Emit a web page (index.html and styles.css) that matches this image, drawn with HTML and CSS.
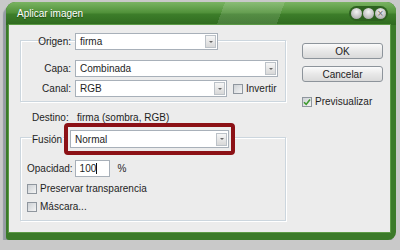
FILE: index.html
```html
<!DOCTYPE html>
<html lang="es">
    <head>
        <meta charset="utf-8">
        <title>Aplicar imagen</title>
        <link rel="stylesheet" href="styles.css">
    </head>
    <body>
        <div class="window">
            <div class="titlebar">
                <span class="title">Aplicar imagen</span>
                <div class="winbtns">
                    <span class="winbtn"></span>
                    <span class="winbtn"></span>
                    <span class="winbtn close">&times;</span>
                </div>
            </div>

            <div class="content">
                <div class="left">
                    <div class="group source">
                        <div class="row">
                            <span class="lbl">Origen:</span>
                            <div class="field select w-origen"><span>firma</span><span class="drop"></span></div>
                        </div>
                        <div class="row capa">
                            <span class="lbl">Capa:</span>
                            <div class="field select w-capa"><span>Combinada</span><span class="drop"></span></div>
                        </div>
                        <div class="row canal">
                            <span class="lbl">Canal:</span>
                            <div class="field select w-canal"><span>RGB</span><span class="drop"></span></div>
                            <span class="check invert"></span>
                            <span class="cblabel">Invertir</span>
                        </div>
                    </div>

                    <div class="dest">
                        <span class="dest-lbl">Destino:</span>
                        <span>firma (sombra, RGB)</span>
                    </div>

                    <div class="group blend">
                        <div class="row blend-row">
                            <span class="legend">Fusión</span>
                            <div class="frame">
                                <div class="field select w-blend"><span>Normal</span><span class="drop"></span></div>
                            </div>
                        </div>
                        <div class="row opacity">
                            <span class="op-lbl">Opacidad:</span>
                            <div class="field w-op"><span>100</span><span class="caret"></span></div>
                            <span class="pct">%</span>
                        </div>
                        <div class="row cbrow first-cb">
                            <span class="check"></span>
                            <span class="cblabel">Preservar transparencia</span>
                        </div>
                        <div class="row cbrow second-cb">
                            <span class="check"></span>
                            <span class="cblabel">Máscara...</span>
                        </div>
                    </div>
                </div>

                <div class="right">
                    <div class="btn">OK</div>
                    <div class="btn cancel">Cancelar</div>
                    <div class="row cbrow preview">
                        <span class="check">
                            <svg width="8" height="8" viewBox="0 0 8 8"><path d="M1 4.2 L3.2 6.4 L7 1.4" fill="none" stroke="#3e9a2e" stroke-width="1.6"/></svg>
                        </span>
                        <span class="cblabel">Previsualizar</span>
                    </div>
                </div>
            </div>
        </div>
    </body>
</html>
```

FILE: styles.css
```css
html {
    background-color: #c9c9c9;
}

body {
    margin: 0px;
    font-family: "Liberation Sans", Arial, sans-serif;
    font-size: 10px;
    color: #1e1e1e;
}

.window {
    width: 390px;
    margin: 2px 0px 0px 6px;
    padding: 0px 6px 8px 3px;
    box-sizing: border-box;
    background-color: #3b7a29;
    border-radius: 9px 9px 8px 3px;
    box-shadow: -3px 4px 1px #959ca3;
}

.titlebar {
    height: 23px;
    margin: 0px -6px 0px -3px;
    padding: 0px 8px 0px 11px;
    display: flex;
    align-items: center;
    justify-content: space-between;
    border-radius: 9px 9px 0px 0px;
    background:
        linear-gradient(110deg, transparent 55%, rgba(255, 255, 255, 0.12) 55%, rgba(255, 255, 255, 0.12) 70%, transparent 70%),
        linear-gradient(#7ab462, #4f9038 48%, #3d7e2a 52%, #2f6a1f);
    color: white;
    text-shadow: 0px 1px 1px #1f4a14;
}

.winbtns {
    display: flex;
    gap: 1px;
    padding: 2px;
    background-color: #2d611f;
    border-radius: 8px;
}

.winbtn {
    width: 11px;
    height: 11px;
    border-radius: 50%;
    background: radial-gradient(circle at 50% 35%, #f4f4f4, #bcbcbc 65%, #8e8e8e);
    display: flex;
    align-items: center;
    justify-content: center;
    font-size: 10px;
    line-height: 10px;
    color: #6a6a6a;
    text-shadow: none;
}

.content {
    height: 207px;
    box-sizing: border-box;
    padding: 8px 0px 0px 11px;
    display: flex;
    background-color: #ececec;
    box-shadow: 0px 0px 0px 1px #5c9a46;
}

.left {
    width: 266px;
}

.right {
    width: 81px;
    margin-left: 16px;
    padding-top: 10px;
}

.row {
    display: flex;
    align-items: center;
}

.group {
    border: 1px solid #ccd6de;
    box-shadow: inset 1px 1px 0px white, 1px 1px 0px white;
}

.source {
    margin-top: 7px;
    padding-bottom: 4px;
}

.source .row:first-child {
    margin-top: -8px;
}

.capa {
    margin-top: 10px;
}

.canal {
    margin-top: 3px;
}

.lbl {
    width: 50px;
    margin-right: 4px;
    text-align: right;
}

.field {
    height: 17px;
    box-sizing: border-box;
    padding-left: 4px;
    display: flex;
    align-items: center;
    border: 1px solid #a8b0b9;
    background-color: white;
}

.drop {
    width: 11px;
    height: 13px;
    margin-left: auto;
    margin-right: 1px;
    box-sizing: border-box;
    display: flex;
    align-items: center;
    justify-content: center;
    border: 1px solid #bcc2c8;
    background: linear-gradient(#f6f6f6, #d8d8d8);
}

.drop::after {
    content: "";
    border-left: 2px solid transparent;
    border-right: 2px solid transparent;
    border-top: 2px solid #666;
}

.w-origen {
    width: 143px;
}

.w-capa {
    width: 203px;
}

.w-canal {
    width: 152px;
}

.check {
    width: 10px;
    height: 10px;
    box-sizing: border-box;
    display: flex;
    align-items: center;
    justify-content: center;
    border: 1px solid #8f969e;
    background: linear-gradient(135deg, #cdd1d5, #f4f4f4);
}

.invert {
    margin-left: 6px;
}

.cblabel {
    margin-left: 3px;
}

.dest {
    height: 12px;
    margin-top: 9px;
    padding-left: 12px;
    display: flex;
    align-items: center;
}

.dest-lbl {
    width: 45px;
}

.blend {
    margin-top: 14px;
    padding: 0px 0px 8px 6px;
}

.blend-row {
    margin-top: -15px;
    padding-left: 5px;
}

.legend {
    padding-right: 1px;
    background-color: #ececec;
}

.frame {
    margin-left: 1px;
    padding: 3px 2px;
    border: 4px solid #8c1116;
    border-radius: 4px;
    background-color: #ececec;
}

.w-blend {
    width: 159px;
    height: 18px;
}

.opacity {
    margin-top: 5px;
}

.op-lbl {
    margin-right: 2px;
}

.w-op {
    width: 35px;
}

.caret {
    width: 1px;
    height: 11px;
    background-color: #111;
}

.pct {
    margin-left: 8px;
}

.cbrow {
    height: 11px;
}

.first-cb {
    margin-top: 6px;
}

.second-cb {
    margin-top: 7px;
}

.btn {
    height: 16px;
    box-sizing: border-box;
    display: flex;
    align-items: center;
    justify-content: center;
    border: 1px solid #8d949b;
    border-radius: 3px;
    background: linear-gradient(#fbfbfb, #e8e8e8 50%, #dadada);
    color: #222;
}

.cancel {
    margin-top: 7px;
}

.preview {
    margin-top: 14px;
}
```
